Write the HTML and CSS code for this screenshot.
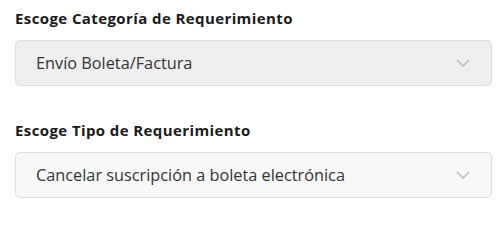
FILE: index.html
```html
<!DOCTYPE html>
<html lang="es">
<head>
<meta charset="utf-8">
<link rel="stylesheet" href="styles.css">
</head>
<body>
<form class="form">
  <div class="field">
    <label class="label">Escoge Categoría de Requerimiento</label>
    <div class="select select--disabled">
      <span class="select__value">Envío Boleta/Factura</span>
      <svg class="chevron" width="14" height="8" viewBox="0 0 14 8"><path d="M1 1 L7 7 L13 1" fill="none" stroke="#b4b4b4" stroke-width="1.3"/></svg>
    </div>
  </div>
  <div class="field">
    <label class="label">Escoge Tipo de Requerimiento</label>
    <div class="select">
      <span class="select__value">Cancelar suscripción a boleta electrónica</span>
      <svg class="chevron" width="14" height="8" viewBox="0 0 14 8"><path d="M1 1 L7 7 L13 1" fill="none" stroke="#b4b4b4" stroke-width="1.3"/></svg>
    </div>
  </div>
</form>
</body>
</html>
```
FILE: styles.css
```css
html, body { margin: 0; padding: 0; background: #fff; }
body { font-family: "Open Sans", "Noto Sans", sans-serif; color: #222; }
.form { padding: 7px 8px 0 15px; display: flex; flex-direction: column; gap: 33px; }
.field { display: flex; flex-direction: column; gap: 11px; }
.label { font-weight: 700; font-size: 15px; letter-spacing: 0.4px; line-height: 22px; color: #1a1a1a; }
.select {
  box-sizing: border-box; height: 46px; width: 477px;
  border: 1px solid #dedede; border-radius: 5px; background: #f8f8f8;
  display: flex; align-items: center; justify-content: space-between;
  padding: 0 21px 0 20px;
}
.select--disabled { background: #efefef; }
.select__value { font-size: 16.3px; color: #333; }
.chevron { display: block; }
```
